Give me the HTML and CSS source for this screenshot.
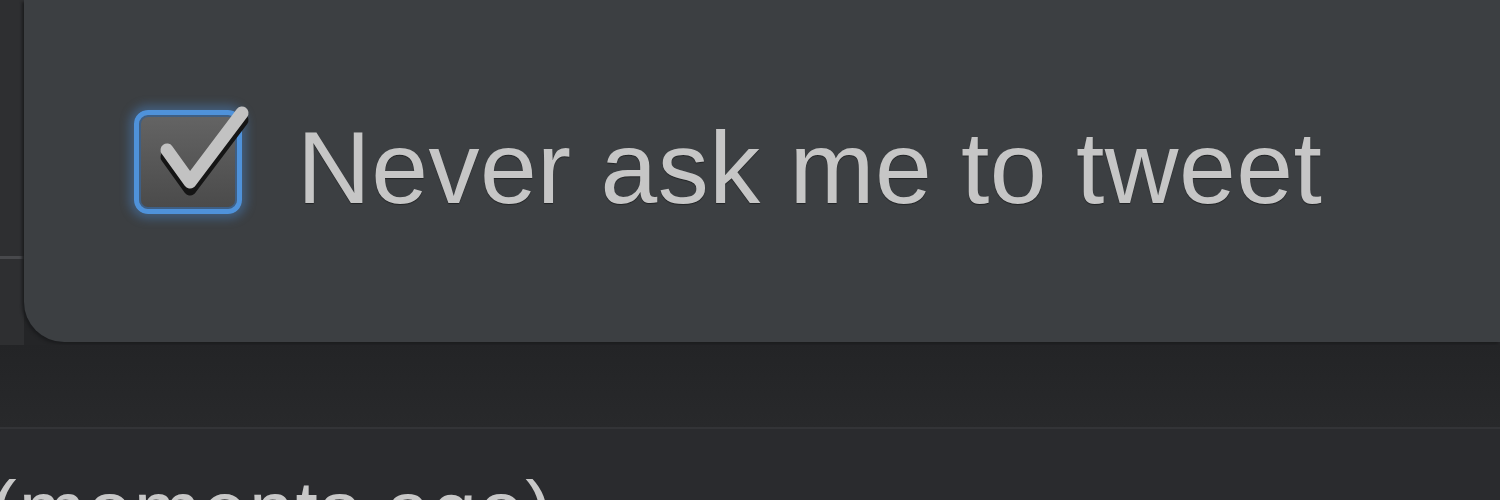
FILE: index.html
```html
<!DOCTYPE html>
<html lang="en">
<head>
    <meta charset="UTF-8">
    <title>Tweet preference</title>
    <link rel="stylesheet" href="styles.css">
</head>
<body>

<div class="window">
    <div class="top">
        <div class="sidebar">
            <div class="sidebar-line"></div>
        </div>
        <div class="panel">
            <label class="option">
                <span class="check">
                    <svg class="tick" width="120" height="120" viewBox="0 0 120 120">
                        <!-- shadow under the tick -->
                        <polyline points="22,54 45,86 97,17" class="tick-shadow"/>
                        <polyline points="22,47 45,79 97,10" class="tick-mark"/>
                    </svg>
                </span>
                <span class="option-text">Never ask me to tweet</span>
            </label>
        </div>
    </div>

    <div class="gap"></div>

    <div class="status">
        <span class="status-text">(moments ago)</span>
    </div>
</div>

</body>
</html>
```

FILE: styles.css
```css
body {
    margin: 0;
    background-color: #2a2b2d;
    font-family: "Liberation Sans", Arial, sans-serif;
    overflow: hidden;
}
.window {
    width: 1500px;
    height: 500px;
    display: flex;
    flex-direction: column;
}
.top {
    display: flex;
    flex-shrink: 0;
    height: 345px;
    background-color: #242527;
}
.sidebar {
    width: 24px;
    background-color: #2e2f31;
    padding-top: 256px;
}
.sidebar-line {
    height: 3px;
    background-color: #48494c;
}
.panel {
    flex: 1;
    height: 342px;
    background-color: #3c3f42;
    border-bottom-left-radius: 40px;
    box-shadow: -2px 2px 3px #1b1c1e;
    padding-left: 110px;
    padding-top: 110px;
    box-sizing: border-box;
}
.option {
    display: flex;
    align-items: flex-start;
}
.check {
    position: relative;
    width: 98px;
    height: 94px;
    border: 5px solid #4f92da;
    border-radius: 14px;
    background: linear-gradient(#646464, #4a4a4a);
    box-shadow: 0 0 10px 5px rgba(75, 143, 216, 0.38), inset 0 0 0 2px #3e5f85;
}
.tick {
    position: absolute;
    left: 6px;
    top: -12px;
}
.tick-mark,
.tick-shadow {
    fill: none;
    stroke-width: 13;
    stroke-linecap: round;
    stroke-linejoin: round;
}
.tick-mark {
    stroke: #c2c2c2;
}
.tick-shadow {
    stroke: #151515;
}
.option-text {
    margin-left: 55px;
    margin-top: 7px;
    font-size: 102px;
    line-height: 102px;
    color: #c6c6c6;
    text-shadow: 0 1px 1px rgba(0, 0, 0, 0.45);
    letter-spacing: 0.5px;
}
.gap {
    flex-shrink: 0;
    height: 82px;
    background: linear-gradient(#232426, #28292b);
}
.status {
    flex: 1;
    min-height: 0;
    overflow: hidden;
    border-top: 2px solid #333437;
    background-color: #2a2b2e;
    padding-top: 41px;
}
.status-text {
    display: block;
    margin-left: -10px;
    font-size: 80px;
    line-height: 80px;
    letter-spacing: 2px;
    color: #c8c8c8;
    white-space: nowrap;
}
```
